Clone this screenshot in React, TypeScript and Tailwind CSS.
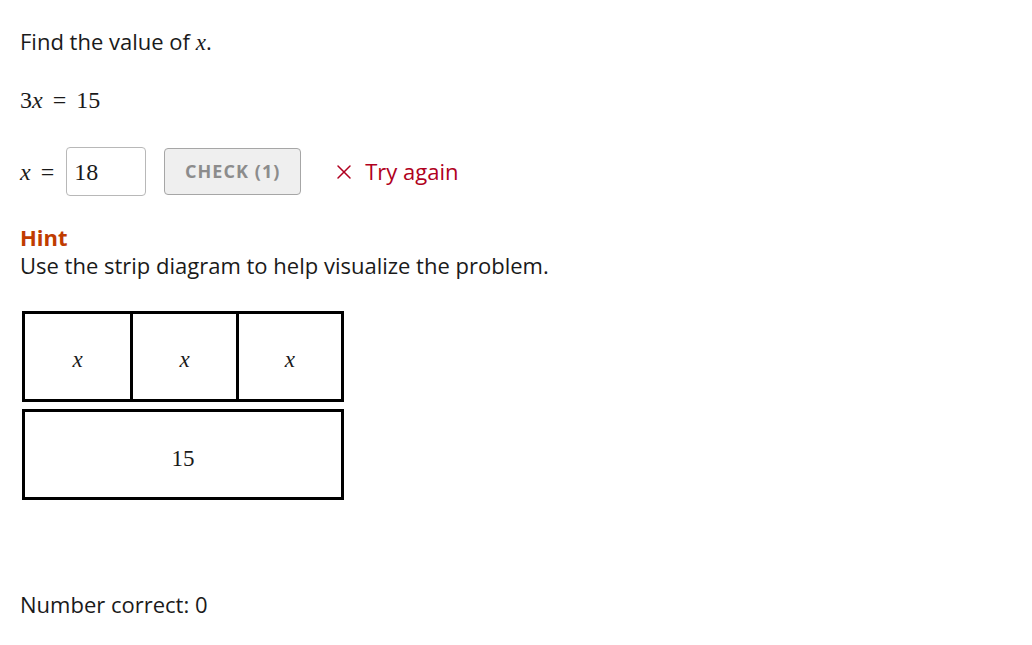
import { X } from 'lucide-react'

const sans = { fontFamily: '"Open Sans", "DejaVu Sans", sans-serif' }
const serif = { fontFamily: '"Liberation Serif", "DejaVu Serif", serif' }

export default function App() {
  return (
    <div className="min-h-screen bg-white px-5 text-[22px] text-[#1a1a1a]" style={sans}>
      {/* Prompt */}
      <p className="pt-[27px] leading-[28px]">
        Find the value of{' '}
        <span className="text-[23px] italic" style={serif}>
          x
        </span>
        .
      </p>

      {/* Equation */}
      <p className="mt-[29px] flex items-baseline text-[24px] leading-[28px]" style={serif}>
        3<span className="italic">x</span>
        <span className="mx-[10px]">=</span>
        15
      </p>

      {/* Answer row */}
      <div className="mt-[33px] flex items-center">
        <span className="flex items-baseline text-[24px]" style={serif}>
          <span className="italic">x</span>
          <span className="ml-[10px]">=</span>
        </span>
        <div
          className="ml-[12px] flex h-[49px] w-[80px] items-center rounded-[4px] border border-[#b8b8b8] px-[7px] text-[24px]"
          style={serif}
        >
          18
        </div>
        <button className="ml-[18px] h-[47px] w-[137px] rounded-[4px] border border-[#a6a6a6] bg-[#efefef] text-[18px] font-bold tracking-[0.06em] text-[#8c8c8c]">
          CHECK (1)
        </button>
        <span className="ml-[31px] flex items-center gap-[9px] text-[#b00020]">
          <X size={24} strokeWidth={1.5} />
          Try again
        </span>
      </div>

      {/* Hint */}
      <div className="mt-[27px]">
        <p className="font-bold leading-[28px] text-[#c03c00]">Hint</p>
        <p className="leading-[29px]">Use the strip diagram to help visualize the problem.</p>
      </div>

      {/* Strip diagram */}
      <div className="mt-[31px] ml-[2px] w-[322px] text-[23px]" style={serif}>
        <div className="grid h-[91px] grid-cols-3 border-[3px] border-black">
          <div className="flex items-center justify-center pt-[8px] italic">x</div>
          <div className="flex items-center justify-center border-l-[3px] border-black pt-[8px] italic">x</div>
          <div className="flex items-center justify-center border-l-[3px] border-black pt-[8px] italic">x</div>
        </div>
        <div className="mt-[7px] flex h-[91px] items-center justify-center border-[3px] border-black pt-[10px]">
          15
        </div>
      </div>

      {/* Score */}
      <p className="mt-[90px] leading-[28px]">Number correct: 0</p>
    </div>
  )
}
